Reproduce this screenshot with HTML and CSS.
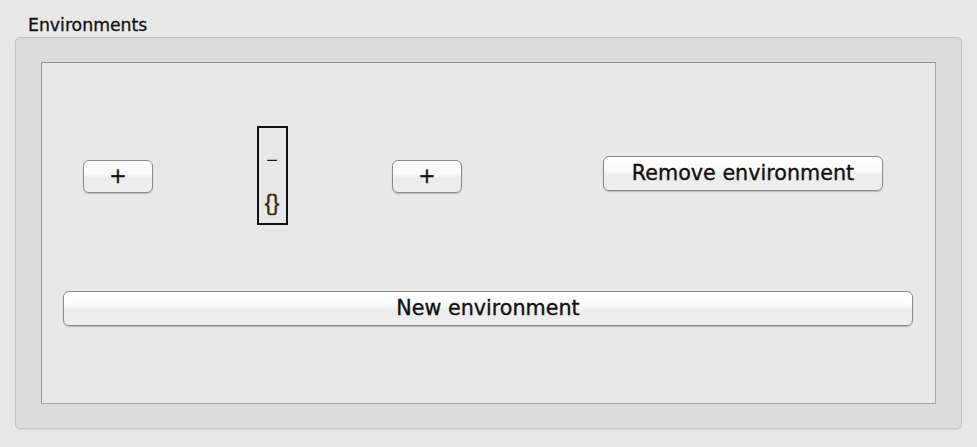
FILE: index.html
```html
<!DOCTYPE html>
<html>
<head>
<meta charset="utf-8">
<link rel="stylesheet" href="styles.css">
</head>
<body>
<div class="title">Environments</div>
<div class="group">
  <div class="frame">
    <div class="row">
      <div class="cell"><button class="btn btn-small">+</button></div>
      <div class="cell">
        <div class="box">
          <span class="minus">−</span>
          <span class="braces">{}</span>
        </div>
      </div>
      <div class="cell"><button class="btn btn-small">+</button></div>
      <div class="cell cell-end"><button class="btn btn-remove">Remove environment</button></div>
    </div>
    <button class="btn btn-new">New environment</button>
  </div>
</div>
</body>
</html>
```

FILE: styles.css
```css
html, body {
  margin: 0;
  padding: 0;
  background: #e8e8e8;
  width: 977px;
  height: 447px;
  overflow: hidden;
  font-family: "DejaVu Sans", "Liberation Sans", sans-serif;
  color: #111;
}

.title {
  padding: 15px 0 0 28px;
  height: 22px;
  line-height: 20px;
  font-size: 17.3px;
  -webkit-text-stroke: 0.3px #111;
}

.group {
  box-sizing: border-box;
  margin: 0 15px;
  height: 392px;
  border: 1px solid #c3c3c3;
  border-radius: 5px;
  background: #dcdcdc;
  padding: 24px 25px 0 25px;
  box-shadow: 0 1px 1px rgba(0,0,0,0.08);
}

.frame {
  box-sizing: border-box;
  height: 342px;
  border: 1px solid #a6a6a6;
  border-top-color: #8e8e8e;
  border-left-color: #979797;
  background: #e8e8e8;
  padding: 63px 22px 0 21px;
}

.row {
  display: grid;
  grid-template-columns: 110px 198px 112px 1fr;
  height: 99px;
  align-items: center;
}

.cell {
  display: flex;
  justify-content: center;
  align-items: center;
}

.cell-end {
  justify-content: flex-end;
  padding-right: 30px;
  margin-top: -4px;
}

.btn {
  font-family: "DejaVu Sans", "Liberation Sans", sans-serif;
  font-size: 20.7px;
  color: #111;
  -webkit-text-stroke: 0.35px #111;
  border: 1px solid #8a8a8a;
  border-radius: 6px;
  background: linear-gradient(#ffffff 0%, #fbfbfb 40%, #ececec 55%, #efefef 100%);
  box-shadow: 0 1px 1px rgba(0,0,0,0.2);
  padding: 0;
  margin: 0;
  line-height: 1;
}

.btn-small {
  width: 70px;
  height: 33px;
  margin-top: 2px;
}

.btn-remove {
  width: 280px;
  height: 35px;
}

.btn-new {
  display: block;
  width: 850px;
  height: 35px;
  margin-top: 66px;
}

.box {
  box-sizing: border-box;
  width: 31px;
  height: 99px;
  border: 2px solid #111;
  display: flex;
  flex-direction: column;
  align-items: center;
  padding-top: 21px;
}

.minus {
  font-family: "Liberation Sans", sans-serif;
  font-size: 20px;
  line-height: 22px;
  height: 22px;
}

.braces {
  font-family: "Liberation Sans", sans-serif;
  font-size: 22px;
  line-height: 24px;
  margin-top: 20px;
  -webkit-text-stroke: 0.4px #3a2a10;
  color: #3a2a10;
}
```
